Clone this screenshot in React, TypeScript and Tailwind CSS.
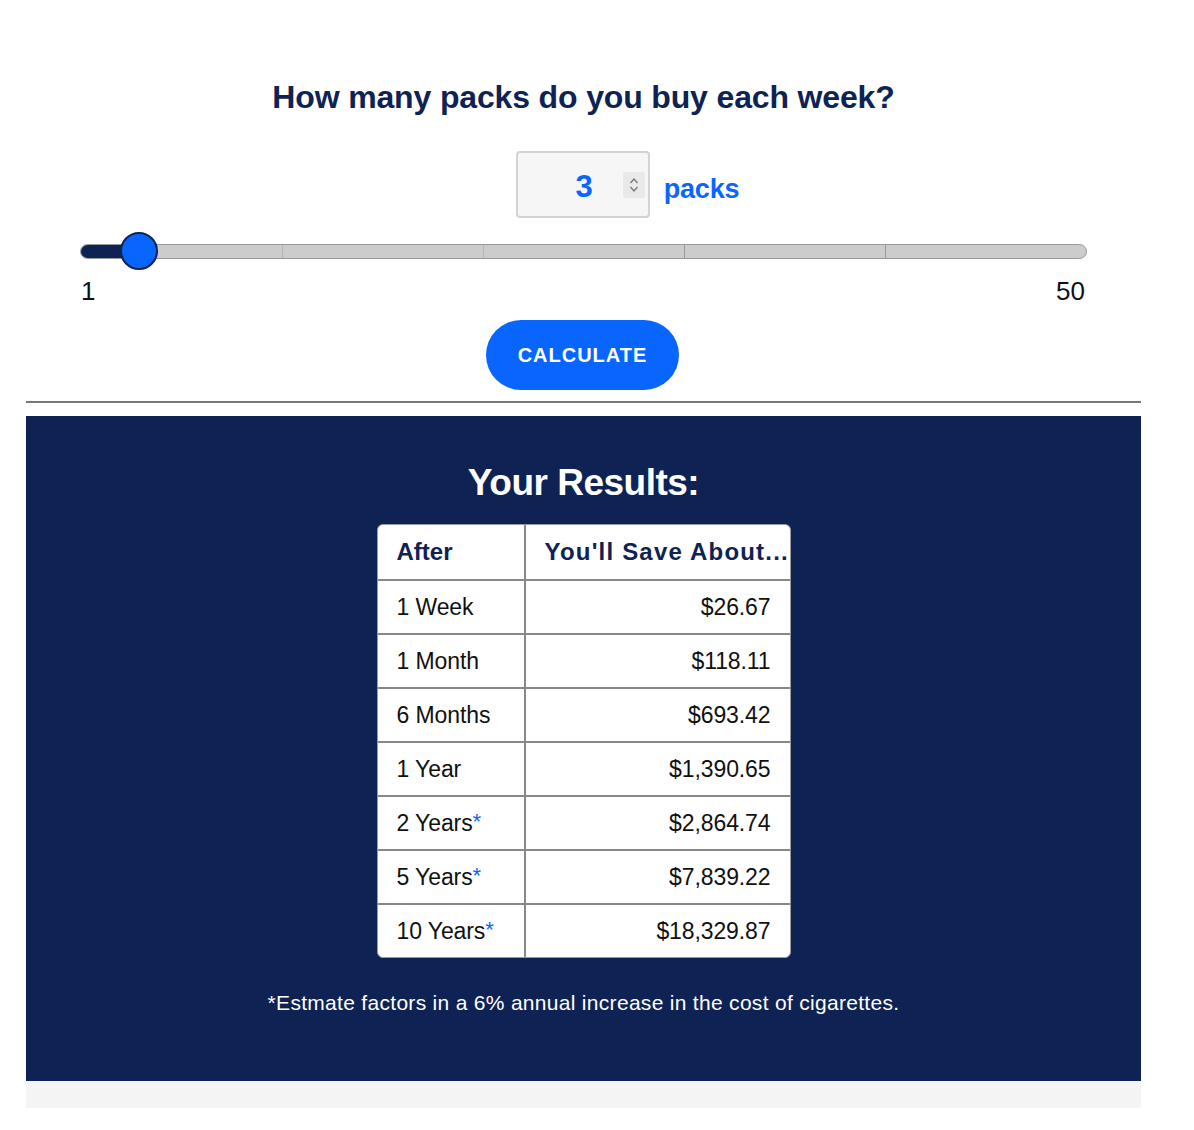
import { useState } from 'react'

const NAVY = '#0e2254'

interface savingsRow {
    label: string
    amount: string
    star: boolean
}

const rows: savingsRow[] = [
    { label: '1 Week', amount: '$26.67', star: false },
    { label: '1 Month', amount: '$118.11', star: false },
    { label: '6 Months', amount: '$693.42', star: false },
    { label: '1 Year', amount: '$1,390.65', star: false },
    { label: '2 Years', amount: '$2,864.74', star: true },
    { label: '5 Years', amount: '$7,839.22', star: true },
    { label: '10 Years', amount: '$18,329.87', star: true },
]

function Spinner () {
    return (
        <div className="w-[22px] h-[26px] bg-[#e9e9e9] rounded-[2px] flex flex-col items-center justify-center">
            <svg width="12" height="22" viewBox="0 0 12 22" fill="none" stroke="#777" strokeWidth="1.3">
                <path d="M2.5 9 L6 5 L9.5 9" />
                <path d="M2.5 13 L6 17 L9.5 13" />
            </svg>
        </div>
    )
}

function PackSlider ({ value }: { value: number }) {
    const pct = (value - 1) / 49
    const thumbLeft = 19 + (1007 - 38) * pct

    return (
        <div className="px-[54px]">
            <div className="relative h-[38px] flex items-center">
                <div className="relative w-full h-[15px] rounded-full bg-[#cccccc] border border-[#999] overflow-hidden flex">
                    <div className="h-full bg-[#0e2254]" style={{ width: thumbLeft }} />
                    <div className="absolute left-[20%] top-0 h-full w-px bg-[#b5b5b5]" />
                    <div className="absolute left-[40%] top-0 h-full w-px bg-[#b5b5b5]" />
                    <div className="absolute left-[60%] top-0 h-full w-px bg-[#999]" />
                    <div className="absolute left-[80%] top-0 h-full w-px bg-[#999]" />
                </div>
                <div
                    className="absolute top-0 w-[38px] h-[38px] rounded-full bg-[#0866ff] border-2 border-[#0e2254] -ml-[19px]"
                    style={{ left: thumbLeft }}
                />
            </div>
            <div className="flex justify-between mt-[6px] text-[26px] leading-[30px] text-[#111] font-['Liberation_Sans',sans-serif]">
                <span className="pl-[1px]">1</span>
                <span className="pr-[2px]">50</span>
            </div>
        </div>
    )
}

export default function App () {
    const [packs] = useState<number>(3)

    return (
        <div className="min-h-[1130px] bg-white font-['Liberation_Sans',sans-serif]">
            <div className="ml-[26px] w-[1115px]">
                <section className="pt-[79px] flex flex-col">
                    <h1 className="text-center text-[32px] leading-[36px] font-bold tracking-[-0.15px]" style={{ color: NAVY }}>
                        How many packs do you buy each week?
                    </h1>

                    <div className="flex justify-center items-center mt-[36px] pl-[88px]">
                        <div className="w-[134px] h-[67px] border-2 border-[#d3d3d3] rounded-[4px] bg-[#f6f6f6] flex items-center justify-end pr-[3px] gap-[30px]">
                            <span className="text-[31px] font-bold text-[#0866ff] mt-[6px]">{packs}</span>
                            <Spinner />
                        </div>
                        <span className="ml-[14px] mt-[10px] text-[27px] font-bold text-[#0866ff] tracking-[-0.2px]">packs</span>
                    </div>

                    <div className="mt-[14px]">
                        <PackSlider value={packs} />
                    </div>

                    <div className="flex justify-center mt-[14px] pr-[2px]">
                        <button className="w-[193px] h-[70px] rounded-full bg-[#0866ff] text-white text-[20px] font-bold tracking-[1px]">
                            CALCULATE
                        </button>
                    </div>

                    <div className="mt-[11px] h-[2px] bg-[#777]" />
                </section>

                <section className="mt-[13px] pt-[45px] pb-[64px] flex flex-col items-center" style={{ backgroundColor: NAVY }}>
                    <h2 className="text-white text-[37px] leading-[44px] font-bold tracking-[-0.5px]">Your Results:</h2>

                    <div className="mt-[19px] w-[414px] bg-white rounded-[6px] overflow-hidden border border-[#9a9a9a]">
                        <div className="grid grid-cols-[148px_1fr] h-[54px] items-stretch">
                            <div className="border-r-2 border-[#888] flex items-center pl-[19px] text-[24px] font-bold" style={{ color: NAVY }}>
                                After
                            </div>
                            <div className="flex items-center pl-[19px] text-[24px] font-bold tracking-[1.2px] whitespace-nowrap" style={{ color: NAVY }}>
                                You'll Save About...
                            </div>
                        </div>
                        {rows.map((row) => (
                            <div key={row.label + '_row'} className="grid grid-cols-[148px_1fr] h-[54px] border-t-2 border-[#888]">
                                <div className="border-r-2 border-[#888] flex items-center pl-[19px] text-[23px] text-[#111] tracking-[-0.1px]">
                                    {row.label}
                                    {row.star && <span className="text-[#0866ff] -mt-[4px] text-[22px]">*</span>}
                                </div>
                                <div className="flex items-center justify-end pr-[19px] text-[23px] text-[#111] tracking-[-0.1px]">
                                    {row.amount}
                                </div>
                            </div>
                        ))}
                    </div>

                    <p className="mt-[31px] text-white text-[21px] leading-[28px] tracking-[0.3px]">
                        *Estmate factors in a 6% annual increase in the cost of cigarettes.
                    </p>
                </section>

                <div className="h-[27px] bg-[#f4f4f4]" />
            </div>
        </div>
    )
}
